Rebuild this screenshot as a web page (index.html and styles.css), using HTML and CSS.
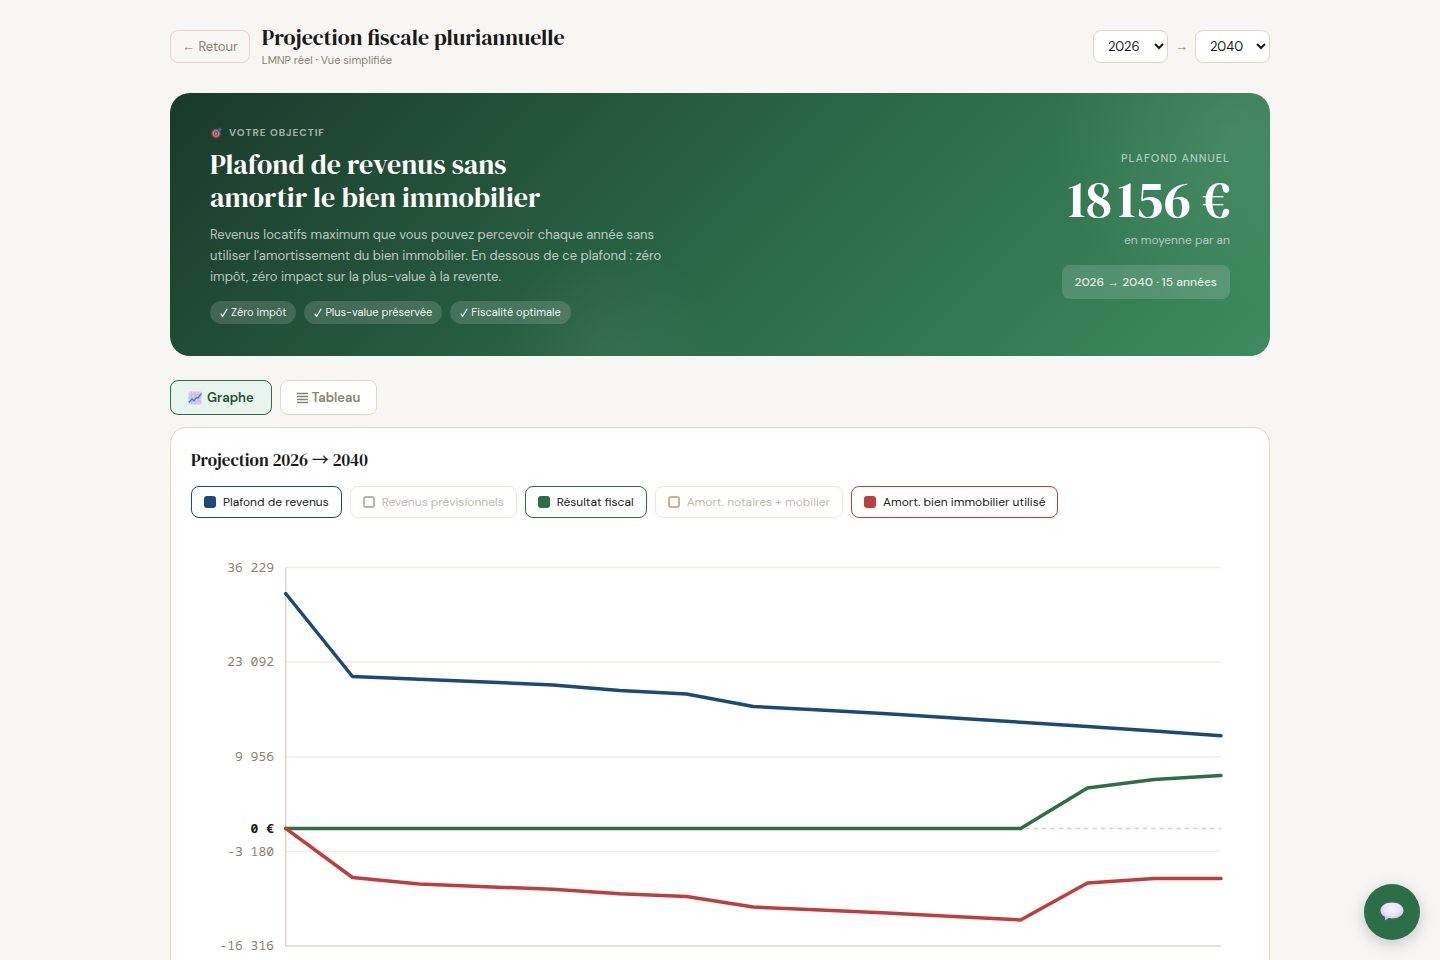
FILE: index.html
```html
<!DOCTYPE html>
<html lang="fr">
<head>
<meta charset="utf-8">
<meta name="viewport" content="width=device-width, initial-scale=1">
<title>Projection fiscale pluriannuelle</title>
<link rel="stylesheet" href="styles.css">
</head>
<body>
<main class="page">
  <header class="header">
    <button class="back" type="button"><span class="arrow">←</span> Retour</button>
    <div class="header-text">
      <h1 class="title">Projection fiscale pluriannuelle</h1>
      <p class="subtitle">LMNP réel · Vue simplifiée</p>
    </div>
    <div class="range">
      <select class="year" aria-label="Année de début"><option>2026</option><option>2027</option></select>
      <span class="arrow">→</span>
      <select class="year" aria-label="Année de fin"><option>2040</option><option>2039</option></select>
    </div>
  </header>

  <section class="hero">
    <div class="hero-main">
      <p class="eyebrow">
        <svg class="eyebrow-icon" viewBox="0 0 12 12" aria-hidden="true">
          <circle cx="6" cy="6.500" r="4.700" fill="#dd3f5c"/>
          <circle cx="6" cy="6.500" r="3.300" fill="#e9b5c4"/>
          <circle cx="6" cy="6.500" r="2.300" fill="#dd3f5c"/>
          <circle cx="6" cy="6.500" r="1" fill="#f2c4d0"/>
          <path d="M6 6.500 9.500 3" stroke="#3592d4" stroke-width="1"/>
          <path d="M8.200 4.400V2.200L10.200.2l.5 1.600 1.300.5-1.800 2.100z" fill="#2c88cc"/>
        </svg>
        Votre objectif
      </p>
      <h2 class="hero-title">Plafond de revenus sans<br>amortir le bien immobilier</h2>
      <p class="hero-copy">Revenus locatifs maximum que vous pouvez percevoir chaque année sans utiliser l'amortissement du bien immobilier. En dessous de ce plafond : zéro impôt, zéro impact sur la plus-value à la revente.</p>
      <ul class="tags">
        <li class="tag"><svg class="check" viewBox="0 0 8 10" aria-hidden="true"><path d="M.8 5.700 2.600 8.300 7.200 .8"/></svg>Zéro impôt</li>
        <li class="tag"><svg class="check" viewBox="0 0 8 10" aria-hidden="true"><path d="M.8 5.700 2.600 8.300 7.200 .8"/></svg>Plus-value préservée</li>
        <li class="tag"><svg class="check" viewBox="0 0 8 10" aria-hidden="true"><path d="M.8 5.700 2.600 8.300 7.200 .8"/></svg>Fiscalité optimale</li>
      </ul>
    </div>
    <div class="hero-figure">
      <p class="figure-label">Plafond annuel</p>
      <p class="figure-value">18&#8239;156 €</p>
      <p class="figure-note">en moyenne par an</p>
      <p class="figure-period">2026 <span class="arrow">→</span> 2040 · 15 années</p>
    </div>
  </section>

  <div class="tabs">
    <button class="tab tab-active" type="button">
      <svg class="tab-icon" viewBox="0 0 14 14" aria-hidden="true">
        <rect x=".5" y=".5" width="13" height="13" rx="1" fill="#dccfe6"/>
        <path d="M3.700.5v13M7 .5v13M10.300.5v13M.5 3.700h13M.5 7h13M.5 10.300h13" stroke="#c3b2d3" stroke-width=".6"/>
        <path d="M.8 11.500 4 8l2 1.700 2.400-3.200 1.600.5 3.500-4.500" fill="none" stroke="#2f86d2" stroke-width="1.300"/>
      </svg>
      Graphe
    </button>
    <button class="tab" type="button">
      <svg class="menu-icon" viewBox="0 0 11 12" aria-hidden="true"><path d="M0 1.500h11M0 4.500h11M0 7.500h11M0 10.500h11"/></svg>
      Tableau
    </button>
  </div>

  <section class="card">
    <h2 class="card-title">Projection 2026 <span class="title-arrow">→</span> 2040</h2>
    <div class="legend">
      <button class="series series-blue" type="button"><span class="swatch"></span>Plafond de revenus</button>
      <button class="series series-grey series-off" type="button"><span class="swatch"></span>Revenus prévisionnels</button>
      <button class="series series-green" type="button"><span class="swatch"></span>Résultat fiscal</button>
      <button class="series series-tan series-off" type="button"><span class="swatch"></span>Amort. notaires + mobilier</button>
      <button class="series series-red" type="button"><span class="swatch"></span>Amort. bien immobilier utilisé</button>
    </div>
    <svg class="chart" viewBox="0 0 1058 460" role="img" aria-label="Projection 2026 à 2040">
      <g class="grid">
        <path d="M95 33.500h935M95 128h935M95 223h935M95 317.500h935"/>
      </g>
      <path class="zero" d="M95 294.500h935"/>
      <path class="axis" d="M94.700 33.500V412H1030"/>
      <g class="ticks">
        <text x="83" y="38">36 229</text>
        <text x="83" y="132">23 092</text>
        <text x="83" y="227">9 956</text>
        <text class="tick-zero" x="83" y="299">0 €</text>
        <text x="83" y="322">-3 180</text>
        <text x="83" y="416">-16 316</text>
      </g>
      <polyline class="line line-blue" points="94.700,59.500 161.500,142.500 228.300,145.300 295.100,148 361.900,151 428.700,156.500 495.500,160 562.300,172.500 629.200,176 696,179.700 762.800,184 829.600,188.200 896.400,192.500 963.200,197 1030,201.700"/>
      <polyline class="line line-green" points="94.700,294.500 829.600,294.500 896.400,254 963.200,245.500 1030,241.500"/>
      <polyline class="line line-red" points="94.700,294.300 161.500,343.500 228.300,350 295.100,352.700 361.900,355.300 428.700,359.700 495.500,362.500 562.300,373 629.200,376 696,379 762.800,382.500 829.600,386 896.400,349 963.200,344.500 1030,344.500"/>
    </svg>
  </section>
</main>
<button class="chat" type="button" aria-label="Ouvrir la discussion">
  <svg class="chat-icon" viewBox="0 0 24 20" aria-hidden="true">
    <defs>
      <radialGradient id="bubble" cx=".5" cy=".35" r=".65">
        <stop offset="0" stop-color="#f8f4fc"/><stop offset=".6" stop-color="#e9e0f3"/><stop offset="1" stop-color="#c3b1d9"/>
      </radialGradient>
    </defs>
    <path d="M12 .5C5.500.5.500 4 .5 8.500c0 3 1.700 5 4.500 6.200V18.500l3.700-2.500c1 .3 2.200.5 3.300.5 6.500 0 11.500-3.500 11.500-8S18.500.5 12 .5z" fill="url(#bubble)"/>
  </svg>
</button>
</body>
</html>
```
FILE: styles.css
```css
* { box-sizing: border-box; }

body {
  margin: 0;
  background: #f7f6f2;
  color: #1a1a1a;
  font-family: "DM Sans", Inter, "Open Sans", sans-serif;
  font-size: 13px;
}

h1, h2, p, ul { margin: 0; padding: 0; }
button, select { font: inherit; }
button { cursor: pointer; }

.page { max-width: 1148px; margin: 0 auto; padding: 24px; }
.arrow { font-family: "Liberation Sans", Arial, sans-serif; font-weight: 400; }

.header { display: flex; align-items: center; gap: 12px; margin-bottom: 24px; }
.back {
  height: 33px; padding: 0 11px;
  border: 1px solid #e2d5c3; border-radius: 8px;
  background: transparent; color: #8a8270;
}
.title, .hero-title, .card-title, .figure-value {
  font-family: "DM Serif Display", "Liberation Serif", serif;
  font-weight: 400;
}
.title { font-size: 22px; line-height: 27px; }
.subtitle { color: #8a8270; font-size: 11px; line-height: 18px; }
.range { display: flex; align-items: center; gap: 7px; margin-left: auto; color: #8a8270; }
.year {
  height: 33px; padding: 0 0 0 10px;
  border: 1px solid #e2d5c3; border-radius: 8px;
  background: #fff; color: #1a1a1a;
  min-width: 75px;
}

.hero {
  display: flex; align-items: center; justify-content: space-between; gap: 40px;
  padding: 32px 40px; margin-bottom: 24px;
  border-radius: 20px; color: #fff;
  background:
    radial-gradient(circle 180px at calc(100% - 40px) 40px, rgba(255, 255, 255, .08), transparent),
    radial-gradient(circle 110px at 40% 98%, rgba(255, 255, 255, .05), transparent),
    linear-gradient(135deg, #1a3a2a 0%, #2d6e4a 60%, #3d8b5e 100%);
}
.hero-main { max-width: 460px; }
.eyebrow {
  display: flex; align-items: center; gap: 7px;
  margin-bottom: 8px;
  color: rgba(255, 255, 255, .6);
  font-size: 10px; font-weight: 700; line-height: 15px; letter-spacing: 1px;
  text-transform: uppercase;
}
.eyebrow-icon { width: 12px; height: 12px; opacity: .7; }
.hero-title { margin-bottom: 10px; font-size: 28px; line-height: 33px; }
.hero-copy { margin-bottom: 14px; color: rgba(255, 255, 255, .7); line-height: 21px; }
.tags { display: flex; flex-wrap: wrap; gap: 8px; list-style: none; }
.tag {
  display: flex; align-items: center; gap: 3px;
  padding: 3px 10px; border-radius: 12px;
  background: rgba(255, 255, 255, .15); color: rgba(255, 255, 255, .95);
  font-size: 11px; font-weight: 400; line-height: 17px;
}
.check { width: 8px; height: 10px; fill: none; stroke: currentColor; stroke-width: 1.2; }

.hero-figure { display: flex; flex-direction: column; align-items: flex-end; flex-shrink: 0; }
.figure-label {
  margin-bottom: 7px; color: rgba(255, 255, 255, .6);
  font-size: 11px; font-weight: 500; line-height: 16px; letter-spacing: 1px; text-transform: uppercase;
}
.figure-value { margin-bottom: 7px; font-size: 52px; line-height: 52px; }
.figure-note { margin-bottom: 17px; color: rgba(255, 255, 255, .6); font-size: 12px; line-height: 16px; }
.figure-period {
  padding: 8px 13px; border-radius: 8px;
  background: rgba(255, 255, 255, .15); color: rgba(255, 255, 255, .85);
  font-size: 12px; font-weight: 500; line-height: 18px;
}

.tabs { display: flex; gap: 8px; margin-bottom: 12px; }
.tab {
  display: flex; align-items: center; gap: 4px;
  height: 35px; padding: 0 16px;
  border: 1px solid #e2d5c3; border-radius: 8px;
  background: #fff; color: #8a8270; font-weight: 600;
}
.tab-active { gap: 5px; padding: 0 17px; border-color: #2d6e4a; background: #e8f5ee; color: #1f5236; }
.tab-icon { width: 14px; height: 14px; }
.menu-icon { width: 11px; height: 12px; stroke: currentColor; stroke-width: 1.3; }

.card { padding: 20px; border: 1px solid #e2d5c3; border-radius: 16px; background: #fff; }
.card-title { margin-bottom: 14px; font-size: 17px; line-height: 24px; }
.title-arrow { font-family: "Noto Sans CJK JP", sans-serif; line-height: 1; }
.legend { display: flex; flex-wrap: wrap; gap: 8px; margin-bottom: 16px; }
.series {
  display: flex; align-items: center; gap: 7px;
  height: 32px; padding: 0 12px;
  border: 1px solid var(--tone); border-radius: 8px;
  background: #fff; color: #1a1a1a; font-size: 12px;
}
.swatch { width: 12px; height: 12px; border: 2px solid var(--tone); border-radius: 3px; background: var(--tone); }
.series-blue { --tone: #1a4a7a; }
.series-green { --tone: #2d6e4a; }
.series-red { --tone: #c03d3d; }
.series-grey { --tone: #b9b4a6; }
.series-tan { --tone: #d4ac88; }
.series-grey.series-off, .series-tan.series-off { border-color: #eee6db; color: #bdb9ae; }
.series-off .swatch { background: #fff; }

.chart { display: block; width: 100%; height: auto; }
.grid { stroke: #f0ebe3; stroke-width: 1.3; }
.zero { stroke: #e2d0bc; stroke-width: 1.3; stroke-dasharray: 4.5 3.9; }
.axis { fill: none; stroke: #e0d5c5; stroke-width: 1.5; }
.ticks { fill: #8a8270; font-family: "Noto Sans Mono", "DejaVu Sans Mono", monospace; font-size: 13px; text-anchor: end; }
.tick-zero { fill: #1a1a1a; font-weight: 700; }
.line { fill: none; stroke-width: 3.5; stroke-linecap: round; stroke-linejoin: round; }
.line-blue { stroke: #1a4a7a; }
.line-green { stroke: #2d6e4a; }
.line-red { stroke: #c03d3d; }

.chat {
  position: fixed; right: 20px; bottom: 20px;
  display: grid; place-items: center;
  width: 56px; height: 56px; padding: 0;
  border: 0; border-radius: 50%;
  background: #2d6e4a; box-shadow: 0 4px 16px rgba(0, 0, 0, .2);
}
.chat-icon { width: 24px; height: 20px; }
```
